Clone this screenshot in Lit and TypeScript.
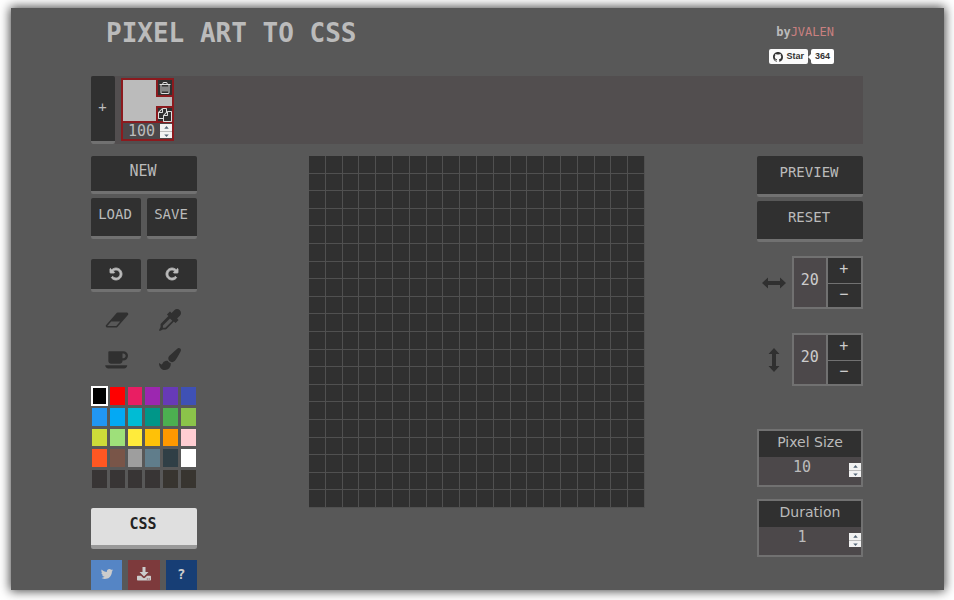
import { LitElement, html, css, svg } from "lit";
import { customElement, state } from "lit/decorators.js";
import { styleMap } from "lit/directives/style-map.js";
import { classMap } from "lit/directives/class-map.js";

const ICONS = {
  undo: { box: "0 0 1792 1792", d: "M1664 896q0 156-61 298t-164 245-245 164-298 61q-172 0-327-72.5t-264-204.5q-7-10-6.5-22.5t8.5-20.5l137-138q10-9 25-9 16 2 23 12 73 95 179 147t225 52q104 0 198.5-40.5t163.5-109.5 109.5-163.5 40.5-198.5-40.5-198.5-109.5-163.5-163.5-109.5-198.5-40.5q-98 0-188 35.5t-160 101.5l137 138q31 30 14 69-17 40-59 40h-448q-26 0-45-19t-19-45v-448q0-42 40-59 39-17 69 14l130 129q107-101 244.5-156.5t284.5-55.5q156 0 298 61t245 164 164 245 61 298z" },
  eraser: { box: "0 0 2048 1792", d: "M960 1408l336-384h-768l-336 384h768zm1013-1077q15 34 9.5 71.5t-30.5 65.5l-896 1024q-38 44-96 44h-768q-38 0-69.5-20.5t-47.5-54.5q-15-34-9.5-71.5t30.5-65.5l896-1024q38-44 96-44h768q38 0 69.5 20.5t47.5 54.5z" },
  dropper: { box: "0 0 1792 1792", d: "M1698 94q94 94 94 226.5t-94 225.5l-225 223 104 104q10 10 10 23t-10 23l-210 210q-10 10-23 10t-23-10l-105-105-603 603q-37 37-90 37h-203l-256 128-64-64 128-256v-203q0-53 37-90l603-603-105-105q-10-10-10-23t10-23l210-210q10-10 23-10t23 10l104 104 223-225q93-94 225.5-94t226.5 94zm-1186 1442l576-576-192-192-576 576v192h192z" },
  cup: { box: "0 0 1920 1792", d: "M1664 640q0-80-56-136t-136-56h-64v384h64q80 0 136-56t56-136zm-1664 768h1792q0 106-75 181t-181 75h-1280q-106 0-181-75t-75-181zm1856-768q0 159-112.5 271.5t-271.5 112.5h-64v32q0 92-66 158t-158 66h-704q-92 0-158-66t-66-158v-736q0-26 19-45t45-19h1152q159 0 271.5 112.5t112.5 271.5z" },
  brush: { box: "0 0 1792 1792", d: "M1615 0q70 0 122.5 46.5t52.5 116.5q0 63-45 151-332 629-465 752-97 91-218 91-126 0-216.5-92.5t-90.5-219.5q0-128 92-212l638-579q59-54 130-54zm-909 1034q39 76 106.5 130t150.5 76l1 71q4 213-129.5 347t-348.5 134q-123 0-218-46.5t-152.5-127.5-86.5-183-29-220q7 5 41 30t62 44.5 59 36.5 46 17q41 0 55-37 25-66 57.5-112.5t69.5-76 88-47.5 103-25.5 125-10.5z" },
  twitter: { box: "0 0 1792 1792", d: "M1684 408q-67 98-162 167 1 14 1 42 0 130-38 259.5t-115.5 248.5-184.5 210.5-258 146-323 54.5q-271 0-496-145 35 4 78 4 225 0 401-138-105-2-188-64.5t-114-159.5q33 5 61 5 43 0 85-11-112-23-185.5-111.5t-73.5-205.5v-4q68 38 146 41-66-44-105-115t-39-154q0-88 44-163 121 149 294.5 238.5t371.5 99.5q-8-38-8-74 0-134 94.5-228.5t228.5-94.5q140 0 236 102 109-21 205-78-37 115-142 178 93-10 186-50z" },
  download: { box: "0 0 14 14", d: "M5.5 0h3v5h3L7 9.500 2.500 5h3zM0 9.500q0-.7.7-.7H4L6 10.800q1 .9 2 0L10 8.800h3.300q.7 0 .7.7v3.300q0 .7-.7.7H.7q-.7 0-.7-.7zM9.800 11.400v1h1v-1zM11.700 11.400v1h1v-1z" },
  trash: { box: "0 0 1792 1792", d: "M704 736v576q0 14-9 23t-23 9h-64q-14 0-23-9t-9-23v-576q0-14 9-23t23-9h64q14 0 23 9t9 23zm256 0v576q0 14-9 23t-23 9h-64q-14 0-23-9t-9-23v-576q0-14 9-23t23-9h64q14 0 23 9t9 23zm256 0v576q0 14-9 23t-23 9h-64q-14 0-23-9t-9-23v-576q0-14 9-23t23-9h64q14 0 23 9t9 23zm128 724v-948h-896v948q0 22 7 40.5t14.5 27 10.5 8.5h832q3 0 10.5-8.5t14.5-27 7-40.5zm-672-1076h448l-48-117q-7-9-17-11h-317q-10 2-17 11zm928 32v64q0 14-9 23t-23 9h-96v948q0 83-47 143.5t-113 60.5h-832q-66 0-113-58.5t-47-141.5v-952h-96q-14 0-23-9t-9-23v-64q0-14 9-23t23-9h309l70-167q15-37 54-63t79-26h320q40 0 79 26t54 63l70 167h309q14 0 23 9t9 23z" },
  copy: { box: "0 0 1792 1792", d: "M1696 384q40 0 68 28t28 68v1216q0 40-28 68t-68 28h-960q-40 0-68-28t-28-68v-288h-544q-40 0-68-28t-28-68v-672q0-40 20-88t48-76l408-408q28-28 76-48t88-20h416q40 0 68 28t28 68v328q68-40 128-40h416zm-544 213l-299 299h299v-299zm-640-384l-299 299h299v-299zm196 647l316-316v-416h-384v416q0 40-28 68t-68 28h-416v640h512v-256q0-40 20-88t48-76zm956 804v-1152h-384v416q0 40-28 68t-68 28h-416v640h896z" },
  github: { box: "0 0 16 16", d: "M8 0C3.580 0 0 3.580 0 8c0 3.540 2.290 6.530 5.470 7.590.4.070.55-.17.55-.38 0-.19-.01-.82-.01-1.490-2.010.37-2.530-.49-2.690-.94-.09-.23-.48-.94-.82-1.130-.28-.15-.68-.52-.01-.53.63-.01 1.080.58 1.230.82.72 1.210 1.870.87 2.330.66.07-.52.28-.87.51-1.070-1.780-.2-3.640-.89-3.640-3.950 0-.87.31-1.590.82-2.150-.08-.2-.36-1.020.08-2.120 0 0 .67-.21 2.200.82.64-.18 1.320-.27 2-.27s1.360.09 2 .27c1.530-1.040 2.200-.82 2.200-.82.44 1.100.16 1.920.08 2.120.51.56.82 1.270.82 2.150 0 3.070-1.870 3.750-3.650 3.950.29.25.54.73.54 1.480 0 1.070-.01 1.930-.01 2.200 0 .21.15.46.55.38A8.010 8.010 0 0 0 16 8c0-4.420-3.580-8-8-8z" },
  arrows: { box: "0 0 24 12", d: "M0 6L6 0.500V4h12V0.500L24 6l-6 5.500V8H6v3.500z" },
  up: { box: "0 0 6 4", d: "M3 0l3 3.500H0z" },
  down: { box: "0 0 6 4", d: "M3 4L0 .5h6z" },
};

type IconName = keyof typeof ICONS;

const icon = (name: IconName, cls: string) => html`
  <svg class=${`icon ${cls}`} viewBox=${ICONS[name].box} aria-hidden="true">
    ${svg`<path fill-rule="evenodd" d=${ICONS[name].d}></path>`}
  </svg>
`;

const PALETTE = [
  "#000000", "#ff0000", "#e91e63", "#9c27b0", "#673ab7", "#3f51b5",
  "#2196f3", "#03a9f4", "#00bcd4", "#009688", "#4caf50", "#8bc34a",
  "#cddc39", "#9ee07a", "#ffeb3b", "#ffc107", "#ff9800", "#ffcdd2",
  "#ff5722", "#795548", "#9e9e9e", "#607d8b", "#303f46", "#ffffff",
  "#383535", "#383535", "#383535", "#383535", "#383530", "#383530",
];

@customElement("app-root")
class AppRoot extends LitElement {
  @state() private columns = 20;
  @state() private rows = 20;
  @state() private colour = 0;
  @state() private pixelSize = 10;
  @state() private duration = 1;
  @state() private share = 100;

  static styles = css`
    * {
      box-sizing: border-box;
    }
    :host {
      box-sizing: border-box;
      display: flex;
      height: 100vh;
      padding: 8px 10px 10px 11px;
      background: #fff;
      color: #bbb;
      font: 14px/20px "DejaVu Sans Mono", monospace;
    }
    .page {
      flex: 1;
      min-width: 0;
      overflow: hidden;
      padding: 0 81px 0 80px;
      background: #585858;
      box-shadow: 0 0 10px 1px #444;
    }
    button,
    input {
      margin: 0;
      padding: 0;
      border: 0;
      border-radius: 0;
      background: none;
      color: inherit;
      font: inherit;
    }
    a {
      color: inherit;
      text-decoration: none;
    }
    .icon {
      display: block;
      flex: none;
      fill: currentColor;
    }
    .s10 {
      width: 10px;
      height: 10px;
    }
    .s14 {
      width: 14px;
      height: 14px;
    }
    .s24 {
      width: 24px;
      height: 22px;
    }
    .bold {
      overflow: visible;
      stroke: currentColor;
      stroke-width: 110px;
    }
    .flip {
      transform: scaleX(-1);
    }

    .header {
      display: flex;
      justify-content: space-between;
      height: 68px;
      padding: 9px 29px 0 15px;
    }
    .title {
      margin: 0;
      font-size: 26px;
      line-height: 32px;
      font-weight: bold;
    }
    .credit {
      display: flex;
      flex-direction: column;
      align-items: flex-end;
      gap: 9px;
      padding-top: 7px;
      font-size: 12px;
      line-height: 16px;
      font-weight: bold;
    }
    .credit p {
      margin: 0;
    }
    .author {
      color: #c98080;
      font-weight: normal;
    }
    .github {
      display: flex;
      gap: 3px;
      color: #333;
      font: bold 9px/15px "Liberation Sans", sans-serif;
    }
    .github a {
      display: flex;
      align-items: center;
      gap: 3px;
      padding: 0 4px;
      border-radius: 2px;
      background: #fafafa;
    }
    .github .count {
      position: relative;
      background: #fff;
    }
    .count::before {
      content: "";
      position: absolute;
      left: -3px;
      top: 5px;
      border: 3px solid transparent;
      border-right-color: #fff;
      border-left: 0;
    }

    .key {
      display: flex;
      align-items: center;
      justify-content: center;
      border-bottom: 3px solid #717171;
      border-radius: 2px;
      background: #303030;
      text-align: center;
    }
    .frames {
      display: flex;
      gap: 6px;
      height: 68px;
      margin-bottom: 12px;
      background: #524e4f;
    }
    .add {
      width: 24px;
      padding: 0 1px 4px 0;
    }
    .frame {
      display: grid;
      grid-template-rows: 1fr 16px;
      width: 53px;
      margin: 2px 0 3px;
      border: 2px solid #8b1a1e;
      background: #4c484a;
    }
    .thumb {
      display: flex;
      flex-direction: column;
      align-items: flex-end;
      justify-content: space-between;
      border-bottom: 2px solid #8b1a1e;
      background: #bbb;
    }
    .thumb button {
      display: grid;
      place-items: center;
      width: 16px;
      height: 17px;
      border: solid #8b1a1e;
      border-width: 0 0 2px 2px;
      background: #303030;
      color: #ddd;
    }
    .thumb .copy {
      height: 15px;
      border-width: 2px 0 0 2px;
    }
    .entry {
      display: flex;
      align-items: center;
      font-size: 15px;
    }
    .entry input {
      flex: 1;
      width: 0;
      min-width: 0;
      text-align: center;
      appearance: textfield;
    }
    input::-webkit-inner-spin-button {
      appearance: none;
      margin: 0;
    }
    .spin {
      display: grid;
      grid-template-rows: 1fr 1fr;
      flex: none;
      width: 12px;
      height: 14px;
      background: #f2f2f2;
      color: #567;
    }
    .spin button {
      display: grid;
      place-items: center;
      min-height: 0;
    }
    .spin button + button {
      border-top: 1px solid #bbb;
    }
    .tick {
      width: 5px;
      height: 3px;
    }
    .frame .entry {
      line-height: 14px;
    }

    .work {
      display: grid;
      grid-template-columns: 106px 1fr 106px;
      align-items: start;
    }
    .pair {
      display: grid;
      grid-template-columns: 1fr 1fr;
      gap: 6px;
    }
    .tools {
      display: flex;
      flex-direction: column;
    }
    .new {
      height: 38px;
      margin-bottom: 4px;
      padding: 0 2px 5px 0;
      font-size: 15px;
    }
    .tall {
      height: 41px;
      padding: 0 2px 7px 0;
    }
    .history {
      margin: 20px 0 17px;
    }
    .history .key {
      height: 33px;
    }
    .brushes {
      display: grid;
      grid-template-columns: 1fr 1fr;
      gap: 17px 0;
      padding-right: 1px;
      color: #303030;
    }
    .brushes button {
      display: grid;
      place-items: center;
    }
    .palette {
      display: grid;
      grid-template-columns: repeat(6, 1fr);
      grid-auto-rows: 1fr;
      gap: 3px;
      height: 101px;
      margin: 17px 0 20px;
      padding: 0 1px;
    }
    .picked {
      outline: 2px solid #fff;
      outline-offset: -1px;
    }
    .css {
      height: 41px;
      padding: 0 2px 5px 0;
      border-bottom: 4px solid #999;
      background: #dfdfdf;
      color: #222;
      font-size: 15px;
      font-weight: bold;
    }
    .links {
      display: grid;
      grid-template-columns: repeat(3, 1fr);
      gap: 6px;
      margin-top: 11px;
    }
    .links a {
      display: grid;
      place-items: center;
      height: 32px;
      padding-bottom: 4px;
      color: #ccc;
      font-weight: bold;
    }
    .tw {
      background: #5585c5;
    }
    .dl {
      background: #7d3a3c;
    }
    .help {
      background: #173e75;
    }

    .canvas {
      display: grid;
      grid-template-columns: repeat(20, 1fr);
      grid-auto-rows: 1fr;
      width: 60%;
      aspect-ratio: 21 / 22;
      justify-self: center;
      background: #303030;
    }
    .cell {
      border: solid #505050;
      border-width: 0 1px 1px 0;
    }

    .settings {
      display: flex;
      flex-direction: column;
      gap: 4px;
    }
    .size {
      display: flex;
      align-items: center;
      justify-content: space-between;
      margin-top: 10px;
      padding-left: 5px;
      color: #303030;
    }
    .size + .size {
      margin-top: 20px;
    }
    .arrow {
      width: 24px;
      height: 12px;
    }
    .turn {
      transform: rotate(90deg);
    }
    .stepper {
      display: grid;
      grid-template-columns: 1fr 1fr;
      grid-template-rows: 1fr 1fr;
      width: 71px;
      height: 53px;
      border: 2px solid #717171;
      background: #303030;
      color: #ccc;
      font-size: 15px;
    }
    .value {
      grid-row: span 2;
      min-width: 0;
      padding-bottom: 6px;
      border-right: 2px solid #717171;
      background: #4c484a;
      text-align: center;
    }
    .stepper button {
      padding: 0 1px 3px 0;
    }
    .stepper button + button {
      border-top: 1px solid #717171;
    }
    .field {
      height: 58px;
      margin-top: 8px;
      border: 2px solid #717171;
      background: #4c484a;
    }
    .size + .field {
      margin-top: 39px;
    }
    .field label {
      display: block;
      height: 26px;
      background: #303030;
      font: 14px/22px "DejaVu Sans", sans-serif;
      text-align: center;
    }
    .field input {
      padding-right: 4px;
    }
    .field .spin {
      margin-top: 6px;
    }
  `;

  private spinner(name: string, change: (by: number) => void) {
    return html`
      <span class="spin">
        <button aria-label=${`Increase ${name}`} @click=${() => change(1)}>${icon("up", "tick")}</button>
        <button aria-label=${`Decrease ${name}`} @click=${() => change(-1)}>${icon("down", "tick")}</button>
      </span>
    `;
  }

  private size(name: string, value: number, turned: boolean, change: (by: number) => void) {
    return html`
      <div class="size">
        ${icon("arrows", turned ? "arrow turn" : "arrow")}
        <div class="stepper">
          <input class="value" type="text" aria-label=${name} .value=${String(value)} />
          <button aria-label=${`More ${name}`} @click=${() => change(1)}>+</button>
          <button aria-label=${`Fewer ${name}`} @click=${() => change(-1)}>−</button>
        </div>
      </div>
    `;
  }

  private field(id: string, name: string, value: number, change: (by: number) => void) {
    return html`
      <div class="field">
        <label for=${id}>${name}</label>
        <div class="entry">
          <input id=${id} type="number" .value=${String(value)} />
          ${this.spinner(name, change)}
        </div>
      </div>
    `;
  }

  render() {
    return html`
      <div class="page">
        <header class="header">
          <h1 class="title">PIXEL ART TO CSS</h1>
          <div class="credit">
            <p>by<a class="author" href="#author">JVALEN</a></p>
            <div class="github">
              <a href="#star">${icon("github", "s10")}Star</a>
              <a class="count" href="#stargazers">364</a>
            </div>
          </div>
        </header>

        <section class="frames" aria-label="Frames">
          <button class="key add" aria-label="Add frame">+</button>
          <div class="frame">
            <div class="thumb">
              <button aria-label="Delete frame">${icon("trash", "s14")}</button>
              <button class="copy" aria-label="Duplicate frame">${icon("copy", "s14")}</button>
            </div>
            <div class="entry">
              <input type="number" aria-label="Frame position" .value=${String(this.share)} />
              ${this.spinner("position", (by) => (this.share += by))}
            </div>
          </div>
        </section>

        <main class="work">
          <div class="tools">
            <button class="key new">NEW</button>
            <div class="pair">
              <button class="key tall">LOAD</button>
              <button class="key tall">SAVE</button>
            </div>
            <div class="pair history">
              <button class="key" aria-label="Undo">${icon("undo", "s14 bold")}</button>
              <button class="key" aria-label="Redo">${icon("undo", "s14 bold flip")}</button>
            </div>
            <div class="brushes">
              <button aria-label="Eraser">${icon("eraser", "s24")}</button>
              <button aria-label="Eyedropper">${icon("dropper", "s24")}</button>
              <button aria-label="Colour picker">${icon("cup", "s24")}</button>
              <button aria-label="Paint">${icon("brush", "s24")}</button>
            </div>
            <div class="palette">
              ${PALETTE.map(
                (c, i) => html`<button
                  class=${classMap({ picked: i === this.colour })}
                  style=${styleMap({ background: c })}
                  aria-label=${`Colour ${c}`}
                  @click=${() => (this.colour = i)}
                ></button>`
              )}
            </div>
            <button class="key css">CSS</button>
            <nav class="links">
              <a class="tw" href="#tweet" aria-label="Twitter">${icon("twitter", "s14")}</a>
              <a class="dl" href="#download" aria-label="Download">${icon("download", "s14")}</a>
              <a class="help" href="#help">?</a>
            </nav>
          </div>

          <div class="canvas">
            ${Array.from({ length: 20 * this.rows }, () => html`<div class="cell"></div>`)}
          </div>

          <div class="settings">
            <button class="key tall">PREVIEW</button>
            <button class="key tall">RESET</button>
            ${this.size("columns", this.columns, false, (by) => (this.columns += by))}
            ${this.size("rows", this.rows, true, (by) => (this.rows += by))}
            ${this.field("pixel-size", "Pixel Size", this.pixelSize, (by) => (this.pixelSize += by))}
            ${this.field("duration", "Duration", this.duration, (by) => (this.duration += by))}
          </div>
        </main>
      </div>
    `;
  }
}
